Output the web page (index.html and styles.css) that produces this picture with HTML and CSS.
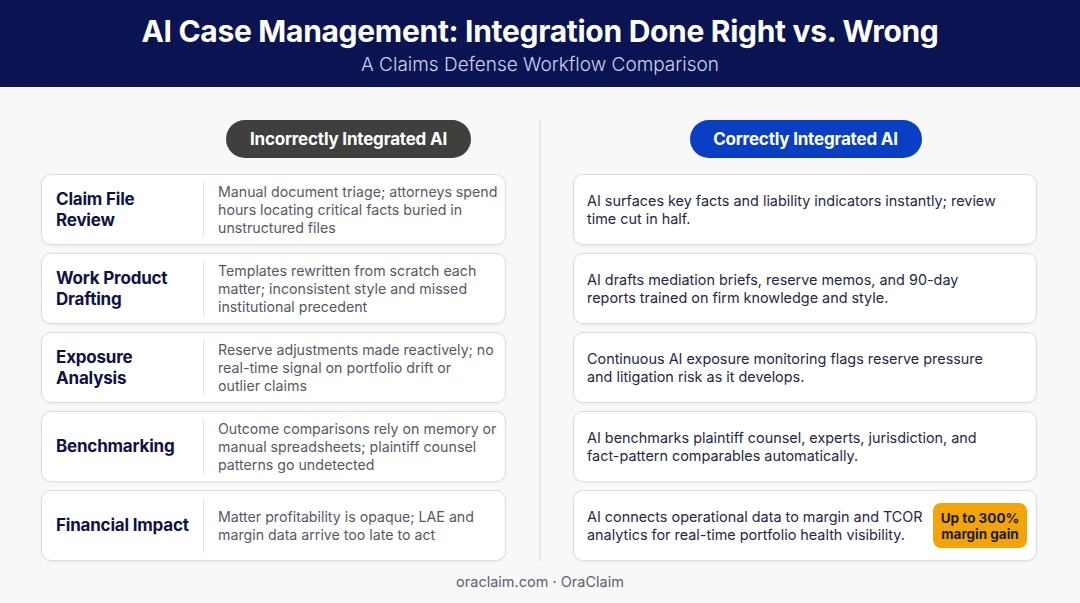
FILE: index.html
```html
<!DOCTYPE html>
<html lang="en">
<head>
<meta charset="utf-8">
<title>AI Case Management</title>
<link rel="stylesheet" href="styles.css">
</head>
<body>
<header class="hero">
  <h1 class="hero-title">AI Case Management: Integration Done Right vs. Wrong</h1>
  <p class="hero-sub">A Claims Defense Workflow Comparison</p>
</header>
<main class="compare">
  <section class="col col-wrong">
    <div class="col-head col-head-wrong"><span class="pill pill-wrong">Incorrectly Integrated AI</span></div>
    <div class="cards">
      <div class="card card-wrong"><div class="label">Claim File Review</div><div class="desc">Manual document triage; attorneys spend hours locating critical facts buried in unstructured files</div></div>
      <div class="card card-wrong"><div class="label">Work Product Drafting</div><div class="desc">Templates rewritten from scratch each matter; inconsistent style and missed institutional precedent</div></div>
      <div class="card card-wrong"><div class="label">Exposure Analysis</div><div class="desc">Reserve adjustments made reactively; no real-time signal on portfolio drift or outlier&nbsp;claims</div></div>
      <div class="card card-wrong"><div class="label">Benchmarking</div><div class="desc">Outcome comparisons rely on memory or manual spreadsheets; plaintiff counsel patterns go undetected</div></div>
      <div class="card card-wrong"><div class="label">Financial Impact</div><div class="desc">Matter profitability is opaque; LAE and margin data arrive too late to act</div></div>
    </div>
  </section>
  <div class="divider"></div>
  <section class="col col-right">
    <div class="col-head col-head-right"><span class="pill pill-right">Correctly Integrated AI</span></div>
    <div class="cards">
      <div class="card card-right"><div class="rdesc">AI surfaces key facts and liability indicators instantly; review time cut in half.</div></div>
      <div class="card card-right"><div class="rdesc">AI drafts mediation briefs, reserve memos, and 90-day reports trained on firm knowledge and style.</div></div>
      <div class="card card-right"><div class="rdesc">Continuous AI exposure monitoring flags reserve pressure and litigation risk as it develops.</div></div>
      <div class="card card-right"><div class="rdesc">AI benchmarks plaintiff counsel, experts, jurisdiction, and fact-pattern comparables automatically.</div></div>
      <div class="card card-right"><div class="rdesc">AI connects operational data to margin and TCOR analytics for real-time portfolio health visibility.</div><div class="badge">Up to 300% margin gain</div></div>
    </div>
  </section>
</main>
<footer class="foot">oraclaim.com · OraClaim</footer>
</body>
</html>
```

FILE: styles.css
```css
* { box-sizing: border-box; }
html, body { margin: 0; padding: 0; }
body {
  width: 1080px;
  height: 603px;
  overflow: hidden;
  background: #f8f8f9;
  font-family: Inter, "Liberation Sans", sans-serif;
  color: #1a1d3a;
}
.hero {
  height: 87px;
  background: #0b1452;
  text-align: center;
  padding-top: 11px;
}
.hero-title {
  margin: 0;
  color: #ffffff;
  font-size: 30px;
  font-weight: 700;
  line-height: 40px;
  letter-spacing: -0.3px;
}
.hero-sub {
  margin: 1px 0 0;
  color: #cdd2f0;
  font-size: 19px;
  font-weight: 300;
  line-height: 26px;
}
.compare {
  display: flex;
  padding: 33px 42px 0 41px;
  height: 476px;
}
.col { width: 465px; }
.col-right { width: 464px; }
.divider {
  width: 2px;
  background: #e8e8ea;
  margin: 0 32px 0 33px;
  height: 441px;
}
.col-head { display: flex; height: 38px; margin-bottom: 16px; }
.col-head-wrong { padding-left: 185px; }
.col-head-right { justify-content: center; padding-left: 1px; }
.pill {
  display: flex;
  align-items: center;
  height: 38px;
  border-radius: 19px;
  color: #ffffff;
  font-size: 17px;
  font-weight: 700;
  letter-spacing: -0.2px;
  padding: 0 23px;
}
.pill-wrong { background: #3f3f3d; width: 245px; justify-content: center; }
.pill-right { background: #0a3fc4; width: 232px; justify-content: center; }
.cards { display: flex; flex-direction: column; gap: 8px; }
.card {
  height: 71px;
  background: #ffffff;
  border: 1px solid #dcdce0;
  border-radius: 10px;
  box-shadow: 0 1px 3px rgba(0,0,0,0.05);
  display: flex;
  align-items: center;
}
.card-wrong { padding: 7px 0; align-items: stretch; }
.label {
  width: 162px;
  flex: none;
  padding-left: 14px;
  padding-right: 12px;
  border-right: 1.5px solid #e3e3e6;
  display: flex;
  align-items: center;
  font-size: 17px;
  font-weight: 700;
  line-height: 21px;
  color: #0e1245;
  letter-spacing: -0.2px;
}
.desc {
  padding-left: 14px;
  padding-right: 4px;
  display: flex;
  align-items: center;
  font-size: 14.2px;
  line-height: 18px;
  color: #555965;
}
.card-right { padding: 0 9px 0 13px; }
.rdesc {
  flex: 1;
  max-width: 416px;
  font-size: 14.4px;
  line-height: 18px;
  color: #252845;
}
.badge {
  flex: none;
  margin-left: auto;
  width: 94px;
  height: 45px;
  background: #f1a509;
  border-radius: 8px;
  color: #1b1b1b;
  font-size: 13.5px;
  font-weight: 700;
  line-height: 16px;
  text-align: center;
  display: flex;
  align-items: center;
  justify-content: center;
  padding: 0 4px;
}
.foot {
  position: absolute;
  left: 0; right: 0; top: 572px;
  text-align: center;
  font-size: 14.5px;
  color: #5d616e;
  line-height: 20px;
}
```
